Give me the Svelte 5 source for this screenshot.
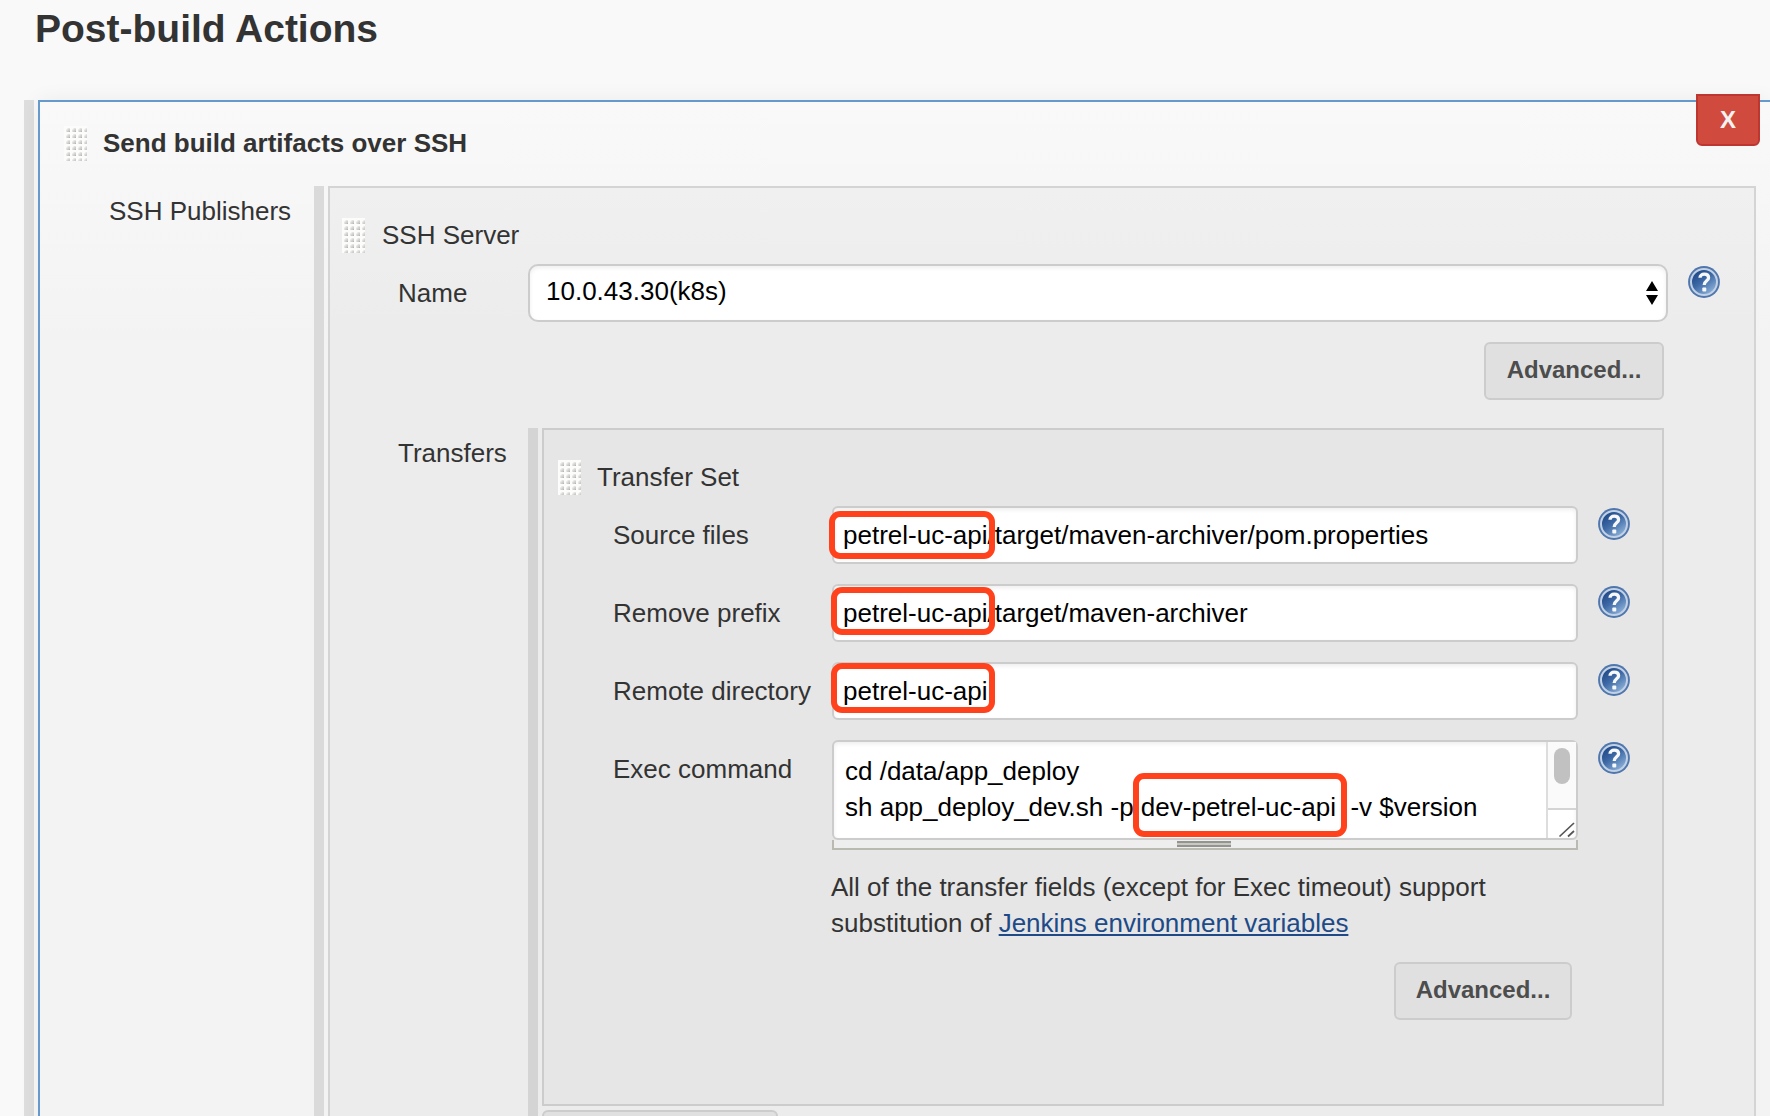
<script>
  const fields = [
    { label: 'Source files', mark: 'petrel-uc-api', rest: '/target/maven-archiver/pom.properties', box: 'm1' },
    { label: 'Remove prefix', mark: 'petrel-uc-api', rest: '/target/maven-archiver', box: 'm2' },
    { label: 'Remote directory', mark: 'petrel-uc-api', rest: '', box: 'm3' }
  ];
</script>

{#snippet grip()}
  <svg class="grip" width="23" height="35" viewBox="0 0 23 35" aria-hidden="true">
    <defs>
      <pattern id="dots" x="1" y="1" width="6" height="6" patternUnits="userSpaceOnUse">
        <rect width="6" height="6" fill="#fcfcfb" />
        <path d="M1 5V3L3 1H5V5Z" fill="#e4e4e2" />
        <path d="M2 5V4L4 2H5V5Z" fill="#cfcfcd" />
        <path d="M3.4 5L5 3.400V5Z" fill="#b4b4b2" />
      </pattern>
    </defs>
    <rect width="23" height="35" fill="url(#dots)" />
  </svg>
{/snippet}

{#snippet help()}
  <svg class="help" width="32" height="32" viewBox="0 0 32 32" aria-hidden="true">
    <defs>
      <linearGradient id="ball" x1="0.15" y1="0.1" x2="0.8" y2="0.95">
        <stop offset="0" stop-color="#1f4786" />
        <stop offset="0.45" stop-color="#3e6aa6" />
        <stop offset="1" stop-color="#8fb3da" />
      </linearGradient>
    </defs>
    <circle cx="16" cy="16" r="15.9" fill="#4f76ad" />
    <circle cx="16" cy="16" r="13" fill="url(#ball)" stroke="#c3d1e5" stroke-width="2" />
    <path d="M12 11.800C12 9.600 13.800 8.200 16.200 8.200C18.900 8.200 20.600 9.500 20.600 11.700C20.600 14.900 16.200 14.700 16.200 19" fill="none" stroke="#f6f8fb" stroke-width="3.3" />
    <rect x="14.300" y="21.500" width="4" height="4" rx="1" fill="#f6f8fb" />
  </svg>
{/snippet}

<main>
  <h1>Post-build Actions</h1>
  <div class="publisher">
    <div class="bar"></div>
    <section class="panel">
      <button class="close">X</button>
      <div class="head">{@render grip()}<b>Send build artifacts over SSH</b></div>
      <div class="row">
        <div class="label outer">SSH Publishers</div>
        <div class="bar mid"></div>
        <section class="server">
          <div class="head">{@render grip()}<span>SSH Server</span></div>
          <div class="name-row">
            <span class="name">Name</span>
            <div class="select">
              <span>10.0.43.30(k8s)</span>
              <svg width="12" height="24" viewBox="0 0 12 24" aria-hidden="true"><path d="M0 10L6 0L12 10ZM0 14H12L6 24Z" fill="#000" /></svg>
            </div>
            {@render help()}
          </div>
          <div class="actions"><button class="btn">Advanced...</button></div>
          <div class="row transfers">
            <div class="label inner">Transfers</div>
            <div class="bar deep"></div>
            <div class="stack">
              <section class="set">
                <div class="head">{@render grip()}<span>Transfer Set</span></div>
                {#each fields as f}
                  <div class="field">
                    <span class="caption">{f.label}</span>
                    <div class="input"><span>{f.mark}{f.rest}</span><i class="mark {f.box}"></i></div>
                    {@render help()}
                  </div>
                {/each}
                <div class="field tall">
                  <span class="caption">Exec command</span>
                  <div class="area-wrap">
                    <div class="area">
                      <div class="code"><div>cd /data/app_deploy</div><div>sh app_deploy_dev.sh -p dev-petrel-uc-api&nbsp; -v $version</div></div>
                      <div class="scroll">
                        <div class="track"><div class="thumb"></div></div>
                        <svg width="28" height="28" viewBox="0 0 28 28" aria-hidden="true"><path d="M11.500 26.500L26 13M20 26.500L26 21" stroke="#555" stroke-width="1.700" /></svg>
                      </div>
                      <i class="mark m4"></i>
                    </div>
                    <div class="resizer"><div class="knob"></div></div>
                  </div>
                  {@render help()}
                </div>
                <p>All of the transfer fields (except for Exec timeout) support<br />substitution of <span class="link">Jenkins environment variables</span></p>
                <div class="actions second"><button class="btn narrow">Advanced...</button></div>
              </section>
              <div class="add"></div>
            </div>
          </div>
        </section>
      </div>
    </section>
  </div>
</main>

<style>
  :global(body) { margin: 0; background: #f9f9f9; }
  main { box-sizing: border-box; width: 1770px; height: 1116px; overflow: hidden; background: #f9f9f9; color: #333; font: 26px/30px "Liberation Sans", Arial, sans-serif; }
  main * { box-sizing: border-box; }
  h1 { margin: 0; height: 100px; padding: 6px 0 0 35px; font-size: 39px; line-height: 46px; font-weight: bold; white-space: nowrap; }
  .publisher { display: flex; gap: 4px; height: 1040px; padding-left: 24px; }
  .bar { flex: none; width: 10px; background: #dedede; }
  .mid { background: #dadada; }
  .deep { background: #d4d4d4; }
  .panel { position: relative; flex: 1; border: 2px solid #6699cc; border-width: 2px 0 0 2px; background: linear-gradient(#f9f9f9, #f3f3f3 240px); box-shadow: 0 0 20px rgba(0, 0, 0, .06); }
  .close { position: absolute; top: -8px; right: 10px; width: 64px; height: 52px; padding: 0; border: 2px solid #bd362f; border-radius: 0 0 6px 6px; background: #d14a3e; color: #f2f2f2; font: bold 24px "Liberation Sans", Arial, sans-serif; }
  .head { display: flex; white-space: nowrap; }
  .grip { flex: none; display: block; }
  .help { flex: none; display: block; }
  .panel > .head { height: 84px; padding: 24px 0 0 24px; gap: 16px; }
  .head b, .head span { padding-top: 2px; }
  .row { display: flex; }
  .panel > .row { height: 960px; padding-right: 14px; }
  .label { flex: none; white-space: nowrap; }
  .outer { width: 274px; padding: 10px 0 0 69px; }
  .server { flex: 1; margin-left: 4px; border: 2px solid #d4d4d4; background: linear-gradient(#f0f0f0, #ececec 140px); }
  .server > .head { height: 76px; padding: 30px 0 0 12px; gap: 17px; }
  .name-row { display: flex; height: 78px; }
  .name { width: 198px; padding: 14px 0 0 68px; }
  .select { display: flex; justify-content: space-between; width: 1140px; height: 58px; padding: 10px 8px 0 16px; border: 2px solid #ccc; border-radius: 10px; background: #fff; color: #000; box-shadow: inset 0 2px 4px rgba(0, 0, 0, .07); }
  .select svg { margin-top: 5px; }
  .name-row .help { margin: 2px 0 0 20px; }
  .actions { display: flex; justify-content: flex-end; padding-right: 90px; }
  .btn { width: 180px; height: 58px; padding: 0 0 2px; border: 2px solid #ccc; border-radius: 6px; background: #e0e0e0; color: #4d4d4d; font: bold 24px "Liberation Sans", Arial, sans-serif; }
  .transfers { height: 720px; margin-top: 28px; }
  .inner { width: 198px; padding: 10px 0 0 68px; }
  .stack { margin-left: 4px; }
  .set { width: 1122px; height: 678px; border: 2px solid #ccc; background: #e6e6e6; }
  .set > .head { height: 76px; padding: 30px 0 0 14px; gap: 16px; }
  .field { display: flex; height: 78px; }
  .caption { flex: none; width: 288px; padding: 14px 0 0 69px; white-space: nowrap; }
  .input { position: relative; width: 746px; height: 58px; padding: 12px 0 0 9px; border: 2px solid #ccc; border-radius: 6px; background: #fff; color: #000; white-space: nowrap; box-shadow: inset 0 2px 4px rgba(0, 0, 0, .07); }
  .field .help { margin: 2px 0 0 20px; }
  .mark { position: absolute; border: 6px solid #ff421c; border-radius: 11px; }
  .m1 { left: -5px; top: 3px; width: 166px; height: 48px; }
  .m2 { left: -3px; top: 1px; width: 164px; height: 48px; }
  .m3 { left: -3px; top: -1px; width: 164px; height: 50px; }
  .m4 { left: 299px; top: 31px; width: 214px; height: 64px; }
  .tall { height: 130px; }
  .area-wrap { width: 746px; }
  .area { position: relative; display: flex; height: 100px; border: 2px solid #ccc; border-radius: 6px; background: #fff; color: #000; box-shadow: inset 0 2px 4px rgba(0, 0, 0, .07); }
  .code { flex: 1; padding: 11px 0 0 11px; line-height: 36px; white-space: nowrap; }
  .scroll { width: 30px; border-left: 2px solid #ddd; }
  .track { height: 68px; padding: 6px 0 0 6px; border-bottom: 2px solid #d4d4d4; background: #fafafa; }
  .thumb { width: 16px; height: 36px; border-radius: 8px; background: #c1c1c1; }
  .scroll svg { display: block; }
  .resizer { height: 10px; padding-top: 1px; border: 2px solid #babab2; border-top: 0; background: #eee; }
  .knob { width: 54px; height: 6px; margin-left: 343px; border: 2px solid #93938f; border-width: 2px 0; background: #c9c9c1; }
  p { margin: -1px 0 0; padding-left: 287px; line-height: 36px; white-space: nowrap; }
  .link { color: #204a87; text-decoration: underline; text-decoration-thickness: 2px; text-underline-offset: 2px; }
  .second { margin-top: 21px; }
  .narrow { width: 178px; }
  .add { width: 236px; height: 58px; margin-top: 4px; border: 2px solid #ccc; border-radius: 6px; background: #e0e0e0; }
</style>
